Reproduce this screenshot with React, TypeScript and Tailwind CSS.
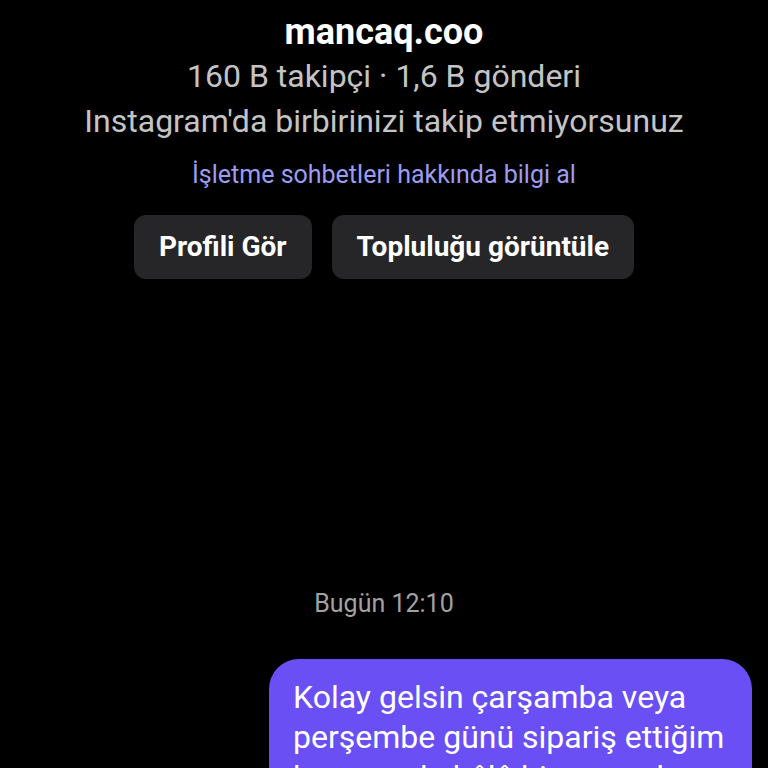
export default function App() {
  return (
    <div className="w-[768px] h-[768px] overflow-hidden bg-black font-['Roboto',sans-serif] flex flex-col items-center">
      {/* profile header */}
      <div className="flex flex-col items-center pt-[10px]">
        <h1 className="text-[36px] leading-[44px] font-bold text-white">mancaq.coo</h1>
        <p className="text-[32px] leading-[45px] text-[#c4c4c4]">160 B takipçi · 1,6 B gönderi</p>
        <p className="text-[32px] leading-[45px] text-[#c4c4c4]">Instagram'da birbirinizi takip etmiyorsunuz</p>
        <p className="mt-[16px] text-[25px] leading-[30px] text-[#9c9cf4]">İşletme sohbetleri hakkında bilgi al</p>
      </div>

      <div className="flex gap-[20px] mt-[25px]">
        <button className="h-[64px] px-[25px] rounded-[12px] bg-[#262628] text-white text-[28px] font-bold">
          Profili Gör
        </button>
        <button className="h-[64px] px-[25px] rounded-[12px] bg-[#262628] text-white text-[28px] font-bold">
          Topluluğu görüntüle
        </button>
      </div>

      {/* messages */}
      <div className="w-full flex flex-col mt-[310px]">
        <p className="text-center text-[25px] leading-[30px] text-[#a2a2a2]">Bugün 12:10</p>
        <div className="flex justify-end pr-[16px] mt-[40px]">
          <div className="w-[483px] rounded-[30px] bg-[#6a4ff5] px-[24px] pt-[18px] pb-[20px] text-white text-[32px] leading-[40px]">
            Kolay gelsin çarşamba veya perşembe günü sipariş ettiğim kargom da hâlâ bir ses yok
          </div>
        </div>
      </div>
    </div>
  )
}
